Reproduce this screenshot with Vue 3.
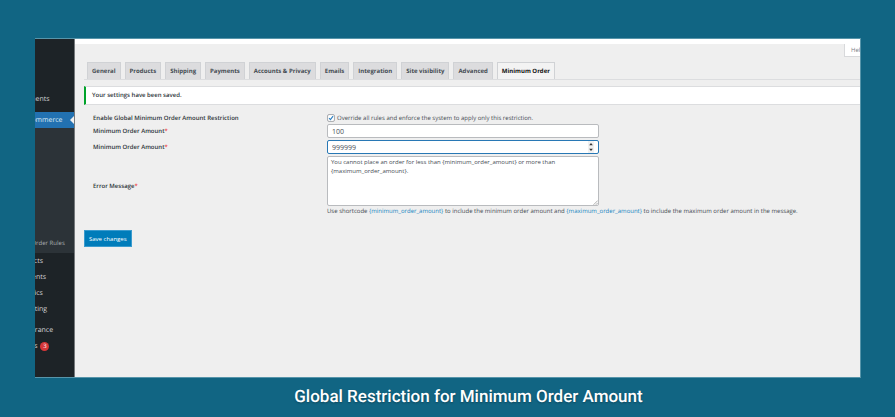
<script setup>
import { ref } from 'vue'

const tabs = [
  'General', 'Products', 'Shipping', 'Payments', 'Accounts & Privacy',
  'Emails', 'Integration', 'Site visibility', 'Advanced', 'Minimum Order'
]
const activeTab = 'Minimum Order'
const override = ref(true)
const minimum = ref('100')
const maximum = ref(999999)
const message = ref('You cannot place an order for less than {minimum_order_amount} or more than {maximum_order_amount}.')

function step(by) {
  maximum.value = Number(maximum.value) + by
}
</script>

<template>
  <figure class="slide">
    <div class="screen">
      <nav class="sidebar" aria-label="Admin menu">
        <div class="menu">
          <a href="#" class="item">Comments</a>
          <a href="#" class="item current">WooCommerce</a>
          <div class="submenu">
            <span class="dot"></span>
            <span class="dot"></span>
            <a href="#" class="sub">Minimum Order Rules</a>
          </div>
          <a href="#" class="item">Products</a>
          <a href="#" class="item">Payments</a>
          <a href="#" class="item">Analytics</a>
          <a href="#" class="item">Marketing</a>
          <a href="#" class="item section">Appearance</a>
          <a href="#" class="item">Plugins <span class="count">3</span></a>
        </div>
      </nav>

      <main class="content">
        <div class="topbar"></div>
        <div class="help-row"><a href="#" class="help">Help</a></div>

        <nav class="tabs" aria-label="Settings">
          <a v-for="tab in tabs" :key="tab" href="#" class="tab" :class="{ active: tab === activeTab }">{{ tab }}</a>
        </nav>

        <div class="notice" role="status">Your settings have been saved.</div>

        <form class="form" @submit.prevent>
          <div class="row check-row">
            <label class="label" for="override">Enable Global Minimum Order Amount Restriction</label>
            <label class="check">
              <input id="override" v-model="override" type="checkbox" class="native" />
              <svg class="box" viewBox="0 0 14 14" aria-hidden="true">
                <rect x="1" y="1" width="12" height="12" rx="2.5" fill="#fff" stroke="#8c8f94" stroke-width="1.3" />
                <path v-if="override" d="M3.6 7.2 6 9.7 10.6 3.8" fill="none" stroke="#2f82c3" stroke-width="2.1" />
              </svg>
              <span>Override all rules and enforce the system to apply only this restriction.</span>
            </label>
          </div>
          <div class="row">
            <label class="label" for="minimum">Minimum Order Amount<em>*</em></label>
            <input id="minimum" v-model="minimum" type="text" class="field" />
          </div>
          <div class="row">
            <label class="label" for="maximum">Minimum Order Amount<em>*</em></label>
            <div class="field number">
              <input id="maximum" v-model="maximum" type="number" class="bare" />
              <div class="spin">
                <button type="button" aria-label="Increase" @click="step(1)">
                  <svg viewBox="0 0 6 4"><path d="M1.2 3.3 3 1 4.8 3.3Z" /></svg>
                </button>
                <button type="button" aria-label="Decrease" @click="step(-1)">
                  <svg viewBox="0 0 6 4"><path d="M1.2 .7 3 3 4.8 .7Z" /></svg>
                </button>
              </div>
            </div>
          </div>
          <div class="row">
            <label class="label" for="message">Error Message<em>*</em></label>
            <div>
              <div class="area">
                <textarea id="message" v-model="message" class="field"></textarea>
                <svg class="grip" viewBox="0 0 5 5" aria-hidden="true"><path d="M.5 4.8 4.8.5M2.8 4.8 4.8 2.8" /></svg>
              </div>
              <p class="hint">
                Use shortcode <code>{minimum_order_amount}</code> to include the minimum order amount and
                <code>{maximum_order_amount}</code> to include the maximum order amount in the message.
              </p>
            </div>
          </div>
          <button type="submit" class="save">Save changes</button>
        </form>
      </main>
    </div>
    <figcaption class="caption">Global Restriction for Minimum Order Amount</figcaption>
  </figure>
</template>

<style>
body {
  background: #116583;
}
</style>

<style scoped>
* {
  box-sizing: border-box;
}
.slide {
  margin: 0;
  min-height: 100vh;
  padding: 38px 34px 0 35px;
  display: flex;
  flex-direction: column;
  background: #116583;
  font-family: "Open Sans", "Noto Sans", sans-serif;
  font-size: 6px;
  color: #454c53;
  text-rendering: geometricPrecision;
}
a {
  color: inherit;
  text-decoration: none;
}
.screen {
  display: flex;
  min-height: 340px;
  background: #efefef;
  border: solid #5795aa;
  border-width: 1px 1px 1px 0;
}
.sidebar {
  flex: none;
  width: 40px;
  display: flex;
  justify-content: flex-end;
  overflow: hidden;
  background: #1d2327;
  border-right: 1px solid #75797c;
  color: #d4d6d8;
}
.menu {
  flex: none;
  width: 80px;
  padding-top: 52px;
}
.item {
  display: flex;
  align-items: center;
  height: 16px;
  padding-left: 20px;
  font-size: 7px;
}
.item.current {
  position: relative;
  height: 16px;
  margin-top: 5px;
  padding-left: 18px;
  background: #2271b1;
  color: #dce9f3;
}
.item.current::after {
  content: "";
  position: absolute;
  right: 0;
  border: 4px solid transparent;
  border-left-width: 0;
  border-right-color: #efefef;
}
.item.section {
  margin-top: 5px;
}
.submenu {
  height: 125px;
  padding: 22px 0 2px 9px;
  display: flex;
  flex-direction: column;
  background: #2c3338;
  color: #a9adb1;
}
.dot {
  width: 2px;
  height: 2px;
  margin: 0 0 78px 30px;
  border-radius: 1px;
  background: #a5373d;
}
.dot + .dot {
  margin-bottom: 3px;
  background: #6d7175;
}
.sub {
  line-height: 16px;
  white-space: nowrap;
}
.count {
  margin-left: 3px;
  width: 9px;
  height: 9px;
  border-radius: 5px;
  background: #d63638;
  color: #fff;
  font-size: 6px;
  line-height: 9px;
  text-align: center;
}
.content {
  flex: 1;
  min-width: 0;
  padding-left: 9px;
}
.topbar {
  height: 5px;
  margin-left: -9px;
  background: #fff;
}
.help-row {
  display: flex;
  justify-content: flex-end;
  height: 18px;
}
.help {
  width: 16px;
  height: 13px;
  padding-left: 6px;
  overflow: hidden;
  line-height: 13px;
  background: #fff;
  border: solid #d8d9db;
  border-width: 0 0 1px 1px;
  color: #787c82;
}
.tabs {
  display: flex;
  gap: 4px;
  padding-left: 3px;
  border-bottom: 1px solid #dcdddf;
}
.tab {
  height: 17px;
  padding: 0 4px;
  border: 1px solid #d0d2d5;
  border-bottom: 0;
  background: #dcdcde;
  font-weight: 700;
  line-height: 16px;
  white-space: nowrap;
}
.tab.active {
  margin-bottom: -1px;
  background: #f3f3f3;
  color: #111;
}
.notice {
  margin-top: 6px;
  height: 19px;
  padding-left: 6px;
  border: 1px solid #dcdddf;
  border-left: 2px solid #00a32a;
  border-right: 0;
  background: #fff;
  color: #2c3338;
  font-weight: 600;
  line-height: 16px;
}
.form {
  padding-top: 6px;
}
.row {
  display: grid;
  grid-template-columns: 234px 272px;
  align-items: center;
  margin-bottom: 2px;
  padding-left: 9px;
}
.check-row {
  height: 13px;
  margin-bottom: 0;
  grid-template-columns: 234px 1fr;
}
.label {
  color: #2c3338;
  font-weight: 600;
}
.label em {
  color: #f04a4a;
  font-style: normal;
}
.check {
  position: relative;
  display: flex;
  align-items: center;
  gap: 2px;
}
.native {
  position: absolute;
  width: 8px;
  height: 8px;
  margin: 0;
  opacity: 0;
}
.box {
  width: 8px;
  height: 8px;
}
.field {
  display: block;
  width: 100%;
  height: 14px;
  margin: 0;
  padding: 0 4px;
  border: 1px solid #b9bbbe;
  border-radius: 2px;
  outline: 0;
  background: #fff;
  color: #454c53;
  font-family: inherit;
  font-size: 7px;
}
.number {
  display: flex;
  align-items: center;
  border-color: #2878b5;
}
.bare {
  flex: 1;
  min-width: 0;
  padding: 0;
  border: 0;
  outline: 0;
  background: none;
  color: inherit;
  font: inherit;
  appearance: textfield;
}
.bare::-webkit-inner-spin-button {
  appearance: none;
}
.spin {
  display: flex;
  flex-direction: column;
  width: 6px;
  background: #f1f1f1;
}
.spin button {
  display: flex;
  height: 6px;
  padding: 1px 0;
  border: 0;
  background: none;
}
.spin svg {
  width: 6px;
  height: 4px;
  fill: #333;
}
.area {
  position: relative;
}
textarea.field {
  height: 50px;
  padding: 1px 3px;
  font-size: 6px;
  line-height: 9px;
  resize: none;
  overflow: hidden;
}
.grip {
  position: absolute;
  right: 1px;
  bottom: 1px;
  width: 5px;
  height: 5px;
  fill: none;
  stroke: #777;
  stroke-width: 0.6;
}
.hint {
  margin: 1px 0 0;
  line-height: 9px;
  white-space: nowrap;
}
.hint code {
  color: #1a86c2;
  font-family: inherit;
}
.save {
  display: block;
  height: 17px;
  margin-top: 14px;
  padding: 0 4px;
  border: 1px solid #3a9bce;
  background: #007cba;
  color: #fff;
  font-family: inherit;
  font-size: 6px;
}
.caption {
  padding: 7px 0 0 41px;
  color: #fff;
  font-family: Roboto, sans-serif;
  font-size: 17px;
  font-weight: 500;
  line-height: 24px;
  text-align: center;
  text-shadow: 0 1px 2px rgba(0, 0, 0, 0.3);
}
</style>
